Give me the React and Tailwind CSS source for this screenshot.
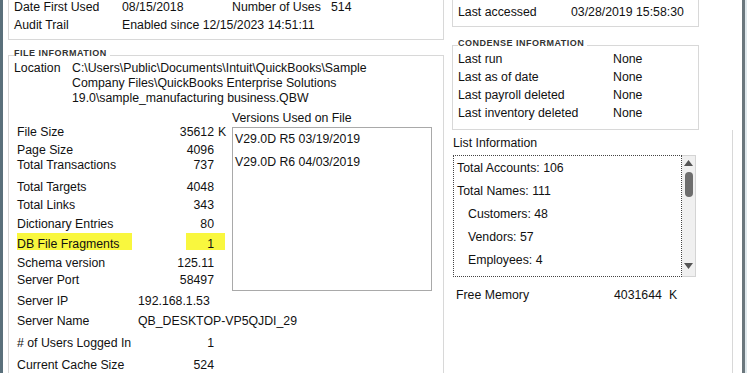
import React from 'react';

const stats = [
  { label: 'File Size', value: '35612', unit: 'K', gap: 'mt-[18.5px]' },
  { label: 'Page Size', value: '4096', gap: 'mt-[2.5px]' },
  { label: 'Total Transactions', value: '737', gap: 'mt-0' },
  { label: 'Total Targets', value: '4048', gap: 'mt-[7.5px]' },
  { label: 'Total Links', value: '343', gap: 'mt-[3px]' },
  { label: 'Dictionary Entries', value: '80', gap: 'mt-[4px]' },
];

const stats2 = [
  { label: 'Schema version', value: '125.11', gap: 'mt-[6px]' },
  { label: 'Server Port', value: '58497', gap: 'mt-[2.3px]' },
];

const condense = ['Last run', 'Last as of date', 'Last payroll deleted', 'Last inventory deleted'];

const lists = [
  { text: 'Total Accounts: 106', indent: false },
  { text: 'Total Names: 111', indent: false },
  { text: 'Customers: 48', indent: true },
  { text: 'Vendors: 57', indent: true },
  { text: 'Employees: 4', indent: true },
];

const GroupHeader = ({ title, height, labelTop }) => (
  <div className={`flex ${height}`}>
    <div className="w-[6px] border-b border-[#d8d8d8]" />
    <div className={`${labelTop} pr-[3px] text-[9px] leading-[10px] font-bold tracking-[0.5px] text-[#333]`}>
      {title}
    </div>
    <div className="flex-1 border-b border-[#d8d8d8]" />
  </div>
);

const StatRow = ({ label, value, unit, gap }) => (
  <div className={`flex ${gap} leading-[15px]`}>
    <span className="w-[150px]">{label}</span>
    <span className="w-[47px] text-right">{value}</span>
    {unit && <span className="ml-[4px]">{unit}</span>}
  </div>
);

export default function App() {
  return (
    <div
      className="flex w-[747px] h-[373px] overflow-hidden bg-white text-[#111] text-[12.3px]"
      style={{ fontFamily: '"Liberation Sans", Arial, sans-serif' }}
    >
      {/* left window edge */}
      <div className="w-[3px] bg-[#5a707b]" />

      {/* left column */}
      <div className="ml-[5px] w-[436px] flex flex-col">
        {/* dates frame */}
        <div className="h-[41px] border-l border-r border-b border-[#d8d8d8] pl-[5px]">
          <div className="flex -mt-[2.5px] leading-[18.3px]">
            <span className="w-[108px]">Date First Used</span>
            <span className="w-[110px]">08/15/2018</span>
            <span className="w-[99px]">Number of Uses</span>
            <span>514</span>
          </div>
          <div className="flex leading-[18.3px]">
            <span className="w-[108px]">Audit Trail</span>
            <span>Enabled since 12/15/2023 14:51:11</span>
          </div>
        </div>

        <GroupHeader title="FILE INFORMATION" height="h-[16px]" labelTop="mt-[7.5px]" />

        {/* file information body */}
        <div className="flex-1 border-l border-r border-[#d8d8d8] pl-[5px]">
          <div className="flex pt-[4.5px] leading-[15.3px]">
            <span className="w-[58px]">Location</span>
            <div>
              <div>C:\Users\Public\Documents\Intuit\QuickBooks\Sample</div>
              <div>Company Files\QuickBooks Enterprise Solutions</div>
              <div>19.0\sample_manufacturing business.QBW</div>
            </div>
          </div>

          <div className="flex">
            {/* stats */}
            <div className="ml-[3px] w-[215px]">
              {stats.map((s) => (
                <StatRow key={s.label} {...s} />
              ))}
              <div className="flex mt-[0.5px] h-[17px]">
                <span className="w-[115px] h-[17px] pt-[4px] leading-[15px] bg-[#f9f73e]">DB File Fragments</span>
                <span className="w-[54px]" />
                <span className="w-[39px] h-[17px] pt-[4px] pr-[11px] leading-[15px] text-right bg-[#f9f73e]">1</span>
              </div>
              {stats2.map((s) => (
                <StatRow key={s.label} {...s} />
              ))}
            </div>

            {/* versions */}
            <div>
              <div className="mt-[4px] leading-[15px]">Versions Used on File</div>
              <div className="mt-[1px] w-[200px] h-[164px] border border-[#a9a9a9] pl-[2px] pt-[4px] leading-[15px]">
                <div>V29.0D R5 03/19/2019</div>
                <div className="mt-[8px]">V29.0D R6 04/03/2019</div>
              </div>
            </div>
          </div>

          <div className="ml-[3px] leading-[15px]">
            <div className="flex mt-[3.7px]">
              <span className="w-[121px]">Server IP</span>
              <span>192.168.1.53</span>
            </div>
            <div className="flex mt-[4.2px]">
              <span className="w-[121px]">Server Name</span>
              <span>QB_DESKTOP-VP5QJDI_29</span>
            </div>
            <div className="flex mt-[7px]">
              <span className="w-[150px]">{'# of Users Logged In'}</span>
              <span className="w-[47px] text-right">1</span>
            </div>
            <div className="flex mt-[7.5px]">
              <span className="w-[150px]">Current Cache Size</span>
              <span className="w-[47px] text-right">524</span>
            </div>
          </div>
        </div>
      </div>

      {/* right column */}
      <div className="w-[289px] flex flex-col">
        <div className="ml-[8px] w-[247px] h-[27px] border-l border-r border-b border-[#d8d8d8] pl-[5px] pt-[4.5px] leading-[15px] flex">
          <span className="w-[113px]">Last accessed</span>
          <span>03/28/2019 15:58:30</span>
        </div>

        <div className="ml-[8px] w-[247px]">
          <GroupHeader title="CONDENSE INFORMATION" height="h-[19px]" labelTop="mt-[10.5px]" />
          <div className="h-[84px] border-l border-r border-b border-[#d8d8d8] pl-[5px] pt-[4px] leading-[18px]">
            {condense.map((c) => (
              <div key={c} className="flex">
                <span className="w-[155px]">{c}</span>
                <span>None</span>
              </div>
            ))}
          </div>
        </div>

        {/* list information */}
        <div className="flex-1 border-r border-[#d8d8d8] pl-[9px]">
          <div className="pt-[5.5px] leading-[15px]">List Information</div>
          <div className="mt-[4.5px] flex w-[243px] h-[122px]">
            <div className="flex-1 border border-dotted border-[#444] pl-[3px] pt-[4.5px] leading-[15px]">
              {lists.map((l) => (
                <div key={l.text} className={`h-[23px] ${l.indent ? 'pl-[11px]' : ''}`}>
                  {l.text}
                </div>
              ))}
            </div>
            <div className="w-[14px] flex flex-col items-center bg-[#f0f0f0] border border-l-0 border-[#d4d4d4]">
              <svg width="9" height="6" viewBox="0 0 9 6" className="mt-[4px]">
                <polygon points="4.5,0 9,6 0,6" fill="#555" />
              </svg>
              <div className="mt-[6px] w-[8px] h-[25px] rounded-[4px] bg-[#6e6e6e]" />
              <div className="flex-1" />
              <svg width="9" height="6" viewBox="0 0 9 6" className="mb-[7px]">
                <polygon points="0,0 9,0 4.5,6" fill="#555" />
              </svg>
            </div>
          </div>
          <div className="flex mt-[10.5px] ml-[3px] leading-[15px]">
            <span className="w-[158px]">Free Memory</span>
            <span>4031644</span>
            <span className="ml-[7px]">K</span>
          </div>
        </div>
      </div>

      <div className="w-[9px]" />
      {/* right window edge */}
      <div className="w-[3px] bg-[#6b777d]" />
      <div className="w-[2px] bg-[#dfe8ec]" />
    </div>
  );
}
